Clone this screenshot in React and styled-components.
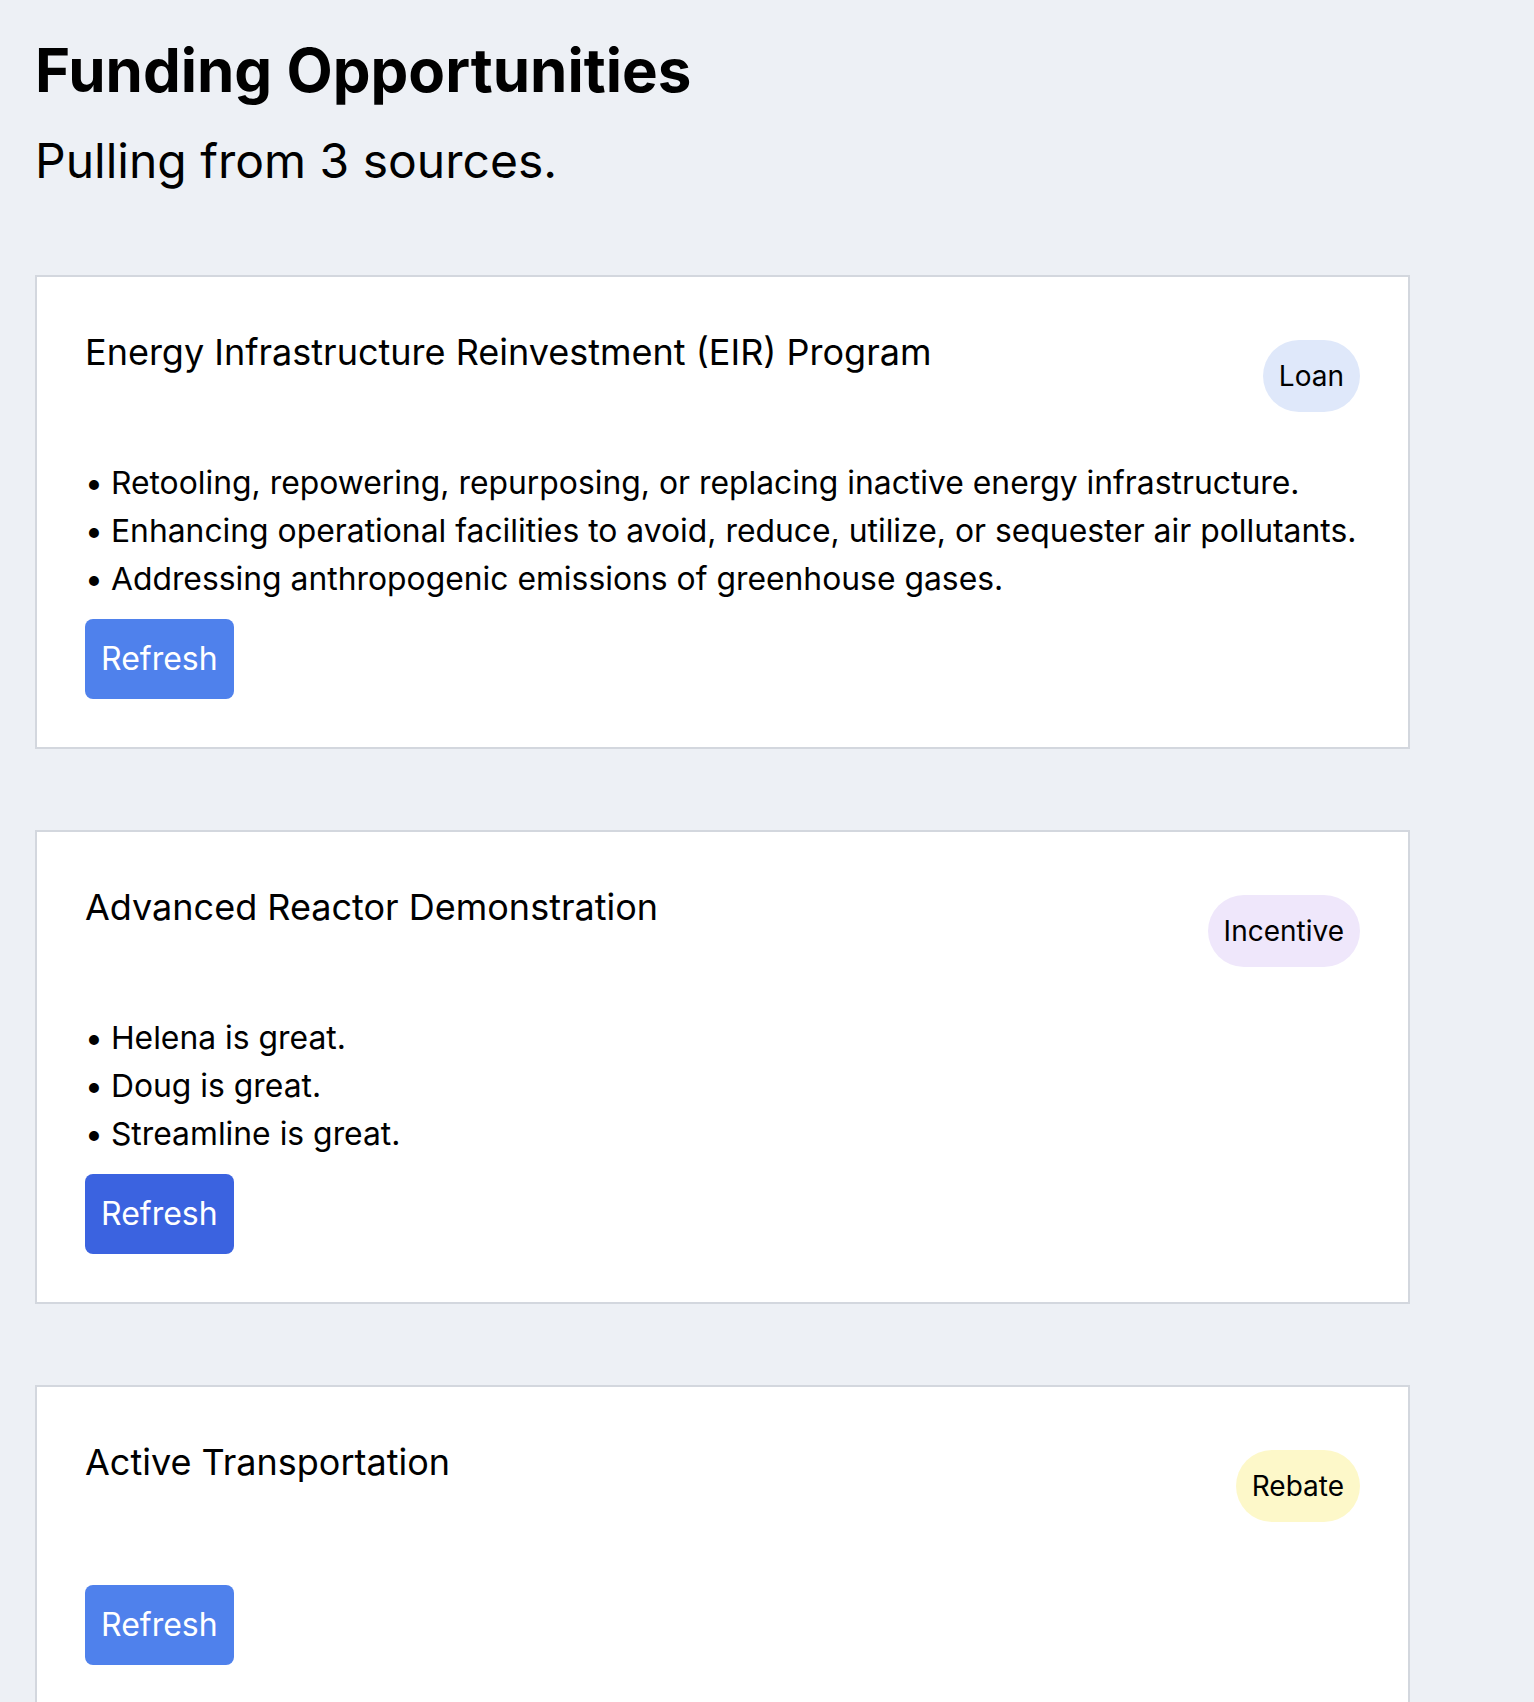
import styled, { createGlobalStyle } from "styled-components";

// styles
const GlobalStyle = createGlobalStyle`
    html, body {
        margin: 0;
        padding: 0;
        background: #edf0f5;
    }
    body {
        font-family: Inter, "Noto Sans", sans-serif;
        color: #000;
    }
`;

const Page = styled.main`
    padding: 34px 35px 0;
`;

const Heading = styled.h1`
    font-size: 60px;
    font-weight: 700;
    line-height: 1.2;
    margin: 0;
`;

const SubHeading = styled.p`
    font-size: 48px;
    line-height: 1.2;
    margin: 26px 0 0;
`;

const CardList = styled.div`
    display: flex;
    flex-direction: column;
    gap: 81px;
    margin-top: 85px;
    width: 1375px;
`;

const Card = styled.section`
    display: flex;
    flex-direction: column;
    align-items: flex-start;
    background: #fff;
    border: 2px solid #d3d7de;
    padding: 48px;
`;

const CardHeader = styled.div`
    display: flex;
    align-items: center;
    justify-content: space-between;
    align-self: stretch;
`;

const CardTitle = styled.h3`
    font-size: 36px;
    font-weight: 400;
    line-height: 1.5;
    margin: 0 0 48px;
`;

const badgeColors = {
    Loan: "#dfe8fa",
    Incentive: "#efe7fb",
    Rebate: "#fdf8c9",
};

const Badge = styled.span`
    font-size: 28px;
    line-height: 42px;
    padding: 15px 16px;
    border-radius: 999px;
    background: ${(p) => badgeColors[p.$kind] || "#eee"};
`;

const Points = styled.ul`
    list-style: none;
    margin: 32px 0 16px;
    padding: 0;
`;

const Point = styled.li`
    font-size: 31.85px;
    line-height: 48px;
    white-space: nowrap;

    &::before {
        content: "•";
        margin-right: 8px;
    }
`;

const RefreshButton = styled.button`
    font-family: inherit;
    font-size: 32px;
    line-height: 48px;
    padding: 16px;
    color: #fff;
    background: ${(p) => (p.$active ? "#3b63e0" : "#4f81ec")};
    border: 0;
    border-radius: 8px;
    cursor: pointer;
`;

const opportunities = [
    {
        title: "Energy Infrastructure Reinvestment (EIR) Program",
        kind: "Loan",
        points: [
            "Retooling, repowering, repurposing, or replacing inactive energy infrastructure.",
            "Enhancing operational facilities to avoid, reduce, utilize, or sequester air pollutants.",
            "Addressing anthropogenic emissions of greenhouse gases.",
        ],
    },
    {
        title: "Advanced Reactor Demonstration",
        kind: "Incentive",
        points: ["Helena is great.", "Doug is great.", "Streamline is great."],
        active: true,
    },
    {
        title: "Active Transportation",
        kind: "Rebate",
        points: [],
    },
];

// component
const OpportunityCard = ({ title, kind, points, active }) => (
    <Card>
        <CardHeader>
            <CardTitle>{title}</CardTitle>
            <Badge $kind={kind}>{kind}</Badge>
        </CardHeader>
        <Points>
            {points.map((point) => (
                <Point key={point}>{point}</Point>
            ))}
        </Points>
        <RefreshButton $active={active}>Refresh</RefreshButton>
    </Card>
);

const App = () => {
    return (
        <Page>
            <GlobalStyle />
            <Heading>Funding Opportunities</Heading>
            <SubHeading>Pulling from {opportunities.length} sources.</SubHeading>
            <CardList>
                {opportunities.map((item) => (
                    <OpportunityCard key={item.title} {...item} />
                ))}
            </CardList>
        </Page>
    );
};

export default App;
